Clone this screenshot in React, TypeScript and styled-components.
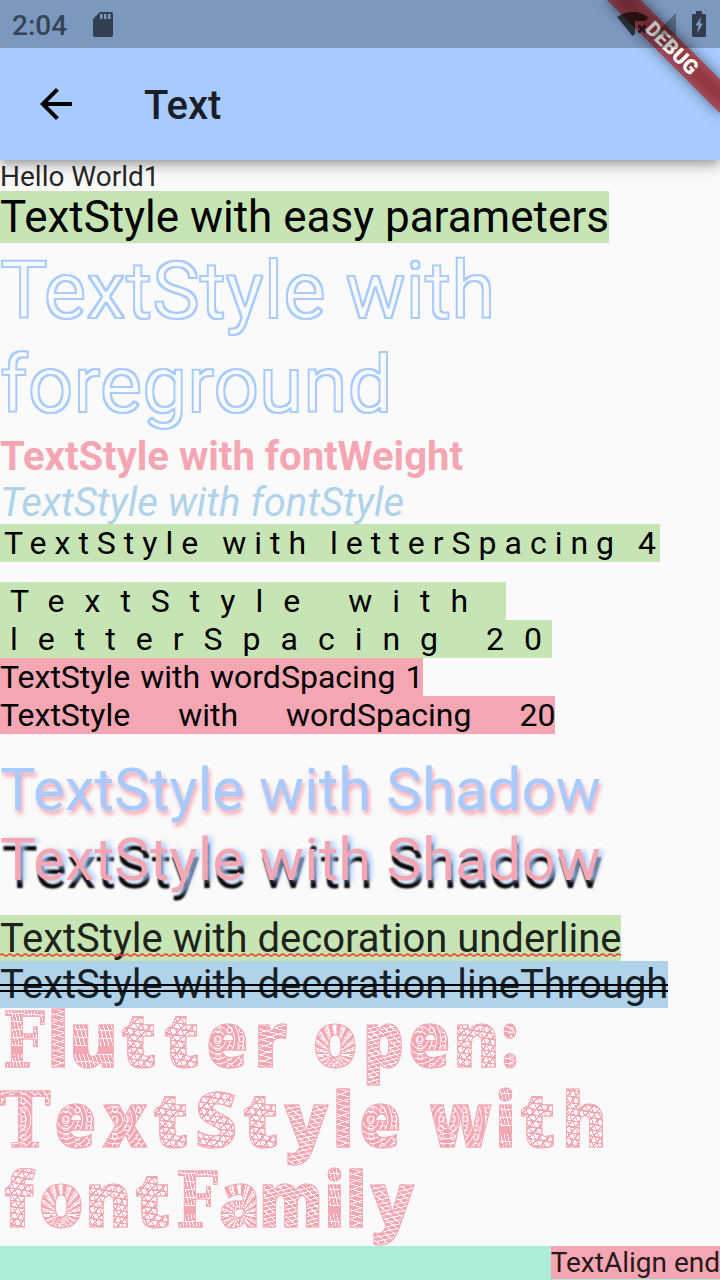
import React from "react";
import styled, { createGlobalStyle } from "styled-components";

const blue = "#a7cbff";
const pink = "#f4a7b3";
const green = "#c7e5b4";
const sky = "#aed3ea";
const paper = "#fafafa";

const Global = createGlobalStyle`
  * { box-sizing: border-box; }
  body { margin: 0; background: ${paper}; font-family: Roboto, sans-serif; }
`;

const Screen = styled.div`
  position: relative;
  width: 720px;
  height: 1280px;
  overflow: hidden;
  display: flex;
  flex-direction: column;
  background: ${paper};
  color: rgba(0, 0, 0, 0.87);
`;

const AppBar = styled.header`
  flex: none;
  height: 160px;
  padding: 48px 0 0 32px;
  display: flex;
  align-items: center;
  background: ${blue};
  box-shadow: 0 4px 8px -2px rgba(0, 0, 0, 0.2), 0 8px 10px rgba(0, 0, 0, 0.14), 0 2px 20px rgba(0, 0, 0, 0.12);
`;

const BackIcon = styled.svg`
  width: 48px;
  height: 48px;
  flex: none;
`;

const Title = styled.h1`
  margin: 3px 0 0 64px;
  font-size: 40px;
  line-height: 47px;
  font-weight: 500;
`;

const BannerCorner = styled.div`
  position: absolute;
  top: 0;
  right: 0;
  width: 0;
  height: 0;
  transform: rotate(45deg);
`;

const Banner = styled.div`
  position: absolute;
  left: -80px;
  top: 56px;
  width: 160px;
  height: 24px;
  background: rgba(183, 28, 28, 0.627);
  color: #fff;
  font-size: 20.4px;
  line-height: 24px;
  font-weight: 900;
  text-align: center;
  &::before {
    content: "";
    position: absolute;
    inset: 0;
    z-index: -1;
    background: rgba(0, 0, 0, 0.5);
    filter: blur(7px);
  }
`;

const StatusBar = styled.div`
  position: absolute;
  inset: 0 0 auto 0;
  height: 48px;
  padding: 2px 14px 0 12px;
  display: flex;
  align-items: center;
  background: rgba(0, 0, 0, 0.25);
  color: #374456;
`;

const Clock = styled.span`
  font-size: 28px;
  line-height: 34px;
  font-weight: 500;
  padding-top: 1px;
  width: 81px;
`;

const StatusIcon = styled.svg<{ $w: number; $h: number; $gap?: number }>`
  width: ${(p) => p.$w}px;
  height: ${(p) => p.$h}px;
  margin-left: ${(p) => p.$gap ?? 0}px;
  margin-top: -2px;
  flex: none;
`;

const Spacer = styled.div`
  flex: 1;
`;

const Body = styled.main`
  flex: 1;
  min-height: 0;
  display: flex;
  flex-direction: column;
  align-items: flex-start;
`;

const Line = styled.div<{
  $size: number;
  $height: number;
  $leading?: number;
  $bg?: string;
  $color?: string;
  $weight?: number;
  $italic?: boolean;
  $word?: number;
  $top?: number;
  $shadow?: string;
}>`
  position: relative;
  flex: none;
  white-space: pre;
  margin-top: ${(p) => p.$top ?? 0}px;
  height: ${(p) => p.$height}px;
  line-height: ${(p) => p.$leading ?? p.$height}px;
  font-size: ${(p) => p.$size}px;
  background: ${(p) => p.$bg ?? "transparent"};
  color: ${(p) => p.$color ?? "inherit"};
  font-weight: ${(p) => p.$weight ?? 400};
  font-style: ${(p) => (p.$italic ? "italic" : "normal")};
  word-spacing: ${(p) => p.$word ?? 0}px;
  text-shadow: ${(p) => p.$shadow ?? "none"};
`;

const Outlined = styled(Line)`
  color: ${blue};
  filter: url(#outline);
`;

const Defs = styled.svg`
  position: absolute;
  width: 0;
  height: 0;
`;

const Spaced = styled.span<{ $gap: number }>`
  letter-spacing: ${(p) => p.$gap}px;
  margin-left: ${(p) => p.$gap / 2}px;
  margin-right: ${(p) => -p.$gap / 2}px;
`;

const Wave = styled.svg`
  position: absolute;
  left: 0;
  top: 36px;
  width: 100%;
  height: 8px;
`;

const Strike = styled.span`
  position: absolute;
  left: 0;
  right: 0;
  top: 23px;
  height: 8px;
  border: solid #000;
  border-width: 2px 0;
`;

const textures = {
  zigzag: `repeating-linear-gradient(14deg, transparent 0 4px, ${paper} 4px 5px), repeating-linear-gradient(-16deg, ${pink} 0 6px, ${paper} 6px 7px)`,
  stripes: `repeating-linear-gradient(38deg, transparent 0 5px, ${paper} 5px 6px), repeating-linear-gradient(-12deg, ${pink} 0 3px, ${paper} 3px 4px)`,
  curls: `radial-gradient(circle at 4px 4px, transparent 2px, ${paper} 2.5px 3px, transparent 3.5px) 0 0 / 13px 9px, repeating-radial-gradient(circle at 30% 40%, ${pink} 0 3px, ${paper} 3.5px 4px, ${pink} 4.5px 5px)`,
  mosaic: `repeating-linear-gradient(63deg, ${pink} 0 1px, transparent 1px 5px), repeating-linear-gradient(-47deg, ${pink} 0 1.5px, transparent 1.5px 7px), repeating-linear-gradient(8deg, ${pink} 0 1.5px, ${paper} 1.5px 6px)`,
  rays: `repeating-conic-gradient(from 4deg at 50% 58%, ${pink} 0 9deg, ${paper} 9deg 12deg, ${pink} 12deg 14deg, ${paper} 14deg 19deg)`,
  blocks: `linear-gradient(transparent 48%, ${pink} 48% 58%, transparent 58%), repeating-linear-gradient(3deg, transparent 0 3px, ${paper} 3px 4px, transparent 4px 8px), repeating-linear-gradient(74deg, ${pink} 0 3px, ${paper} 3px 4px)`,
};
type Texture = keyof typeof textures;

const PatternBlock = styled.div`
  flex: none;
  height: 238px;
`;

const PatternLine = styled.div`
  height: 80px;
  display: flex;
  white-space: pre;
  font-size: 76px;
  line-height: 60px;
`;

const Cell = styled.span<{ $w: number }>`
  flex: none;
  width: ${(p) => p.$w}px;
  display: flex;
  justify-content: center;
`;

const Glyph = styled.span<{ $texture: Texture; $scale: number; $serif: boolean }>`
  flex: none;
  height: 80px;
  padding: ${(p) => (p.$serif ? 3 : 0)}px 4px 0;
  margin: 0 -4px;
  transform: scaleX(${(p) => p.$scale});
  font-family: ${(p) => (p.$serif ? '"DejaVu Serif"' : '"Open Sans"')}, sans-serif;
  font-weight: ${(p) => (p.$serif ? 700 : 800)};
  color: transparent;
  background: ${(p) => textures[p.$texture]};
  -webkit-background-clip: text;
  background-clip: text;
  -webkit-text-stroke: 1px ${pink};
`;

const glyphs: Record<string, [Texture, number]> = {
  F: ["blocks", 0.78], T: ["curls", 0.9], S: ["mosaic", 0.96],
  l: ["zigzag", 0.85], u: ["blocks", 0.96], t: ["mosaic", 1.03],
  e: ["curls", 0.9], r: ["zigzag", 0.93], o: ["rays", 0.94],
  p: ["stripes", 0.84], n: ["mosaic", 0.91], ":": ["curls", 0.75],
  x: ["curls", 0.93], y: ["stripes", 0.94], w: ["curls", 0.9],
  i: ["blocks", 0.82], h: ["mosaic", 0.88], f: ["mosaic", 0.94],
  a: ["rays", 0.88], m: ["stripes", 0.84],
};

const PatternText = ({ text, widths }: { text: string; widths: number[] }) => (
  <PatternLine>
    {[...text].map((c, i) => (
      <Cell key={i} $w={widths[i]}>
        {c === " " ? " " : (
          <Glyph $texture={glyphs[c][0]} $scale={glyphs[c][1]} $serif={"FT".includes(c)}>{c}</Glyph>
        )}
      </Cell>
    ))}
  </PatternLine>
);

const EndRow = styled.div`
  flex: none;
  align-self: stretch;
  display: flex;
  justify-content: flex-end;
  height: 34px;
  background: #abedd8;
`;

const wavePath = "M0 4" + Array.from({ length: 82 }, () => "q1.95 -1.9 3.9 0t3.9 0").join("");

export default function App() {
  return (
    <>
      <Global />
      <Screen>
        <Defs>
          <filter id="outline" x="-1%" y="-5%" width="102%" height="110%" colorInterpolationFilters="sRGB">
            <feMorphology in="SourceGraphic" operator="dilate" radius="1" result="outer" />
            <feMorphology in="SourceGraphic" operator="erode" radius="1" result="inner" />
            <feComposite in="outer" in2="inner" operator="out" />
          </filter>
        </Defs>
        <AppBar>
          <BackIcon viewBox="0 0 24 24">
            <path fill="#000" d="M20 11H7.83l5.59-5.59L12 4l-8 8 8 8 1.41-1.41L7.83 13H20z" />
          </BackIcon>
          <Title>Text</Title>
        </AppBar>
        <Body>
          <Line $size={28} $height={31} $leading={33}>Hello World1</Line>
          <Line $size={44} $height={52} $bg={green} $color="#000">TextStyle with easy parameters</Line>
          <Outlined $size={80} $height={94} $leading={96}>TextStyle with</Outlined>
          <Outlined $size={80} $height={94} $leading={96}>foreground</Outlined>
          <Line $size={40} $height={47} $color={pink} $weight={700} $top={2}>TextStyle with fontWeight</Line>
          <Line $size={40} $height={44} $leading={46} $color={sky} $italic>TextStyle with fontStyle</Line>
          <Line $size={32} $height={38} $bg={green} $color="#000"><Spaced $gap={8}>TextStyle with letterSpacing 4</Spaced></Line>
          <Line $size={32} $height={38} $bg={green} $color="#000" $top={20}><Spaced $gap={20}>{"TextStyle with "}</Spaced></Line>
          <Line $size={32} $height={38} $bg={green} $color="#000"><Spaced $gap={20}>letterSpacing 20</Spaced></Line>
          <Line $size={32} $height={38} $bg={pink} $color="#000" $word={2}>TextStyle with wordSpacing 1</Line>
          <Line $size={32} $height={38} $bg={pink} $color="#000" $word={40}>TextStyle with wordSpacing 20</Line>
          <Line $size={60} $height={70} $color={blue} $top={21} $shadow={`2px 4px 4px ${pink}`}>TextStyle with Shadow</Line>
          <Line $size={60} $height={70} $color={pink} $shadow={`4px 1px 5px ${blue}, 2px 8px 2px #000`}>TextStyle with Shadow</Line>
          <Line $size={40} $height={46} $leading={48} $bg={green} $top={20}>
            TextStyle with decoration underline
            <Wave><path d={wavePath} fill="none" stroke="#f44336" strokeWidth="1.6" /></Wave>
          </Line>
          <Line $size={40} $height={47} $bg={sky}>TextStyle with decoration lineThrough<Strike /></Line>
          <PatternBlock>
            <PatternText text="Flutter open:" widths={[47, 22, 48, 42, 44, 48, 40, 19, 50, 46, 47, 47, 19]} />
            <PatternText text="TextStyle with" widths={[51, 49, 49, 43, 47, 42, 51, 23, 50, 21, 69, 21, 43, 50]} />
            <PatternText text="fontFamily" widths={[37, 49, 45, 43, 46, 39, 64, 22, 22, 51]} />
          </PatternBlock>
          <EndRow>
            <Line $size={28} $height={33} $bg={pink}>TextAlign end</Line>
          </EndRow>
        </Body>
        <BannerCorner><Banner>DEBUG</Banner></BannerCorner>
        <StatusBar>
          <Clock>2:04</Clock>
          <StatusIcon $w={20} $h={25} viewBox="0 0 20 25">
            <path fill="#323f50" fillRule="evenodd" d="M7 0h11q2 0 2 2v21q0 2-2 2H2q-2 0-2-2V7zM7 2v5h2.500V2zm4 0v5h2.500V2zm4 0v5h2.500V2z" />
          </StatusIcon>
          <Spacer />
          <StatusIcon $w={31} $h={25} viewBox="0 0 31 25">
            <path fill="#000" fillOpacity=".65" d="M0 5Q15.500-5 31 5l-2 4H18v13l-2.500 2z" />
            <path stroke="#000" strokeOpacity=".65" strokeWidth="2.600" d="m21.500 13.500 7 7m0-7-7 7" />
          </StatusIcon>
          <StatusIcon $w={22} $h={22} $gap={6} viewBox="0 0 22 22">
            <path fill="#000" fillOpacity=".3" d="M22 0v22H0z" />
          </StatusIcon>
          <StatusIcon $w={14} $h={26} $gap={16} viewBox="0 0 14 26">
            <path fill="#303c4d" d="M4 0h6v3h3l1 1v21l-1 1H1l-1-1V4l1-1h3z" />
            <path fill="#8099bf" d="M9 6 3.500 14.500H6.500L5 22.500 11 12.500H8z" />
          </StatusIcon>
        </StatusBar>
      </Screen>
    </>
  );
}
